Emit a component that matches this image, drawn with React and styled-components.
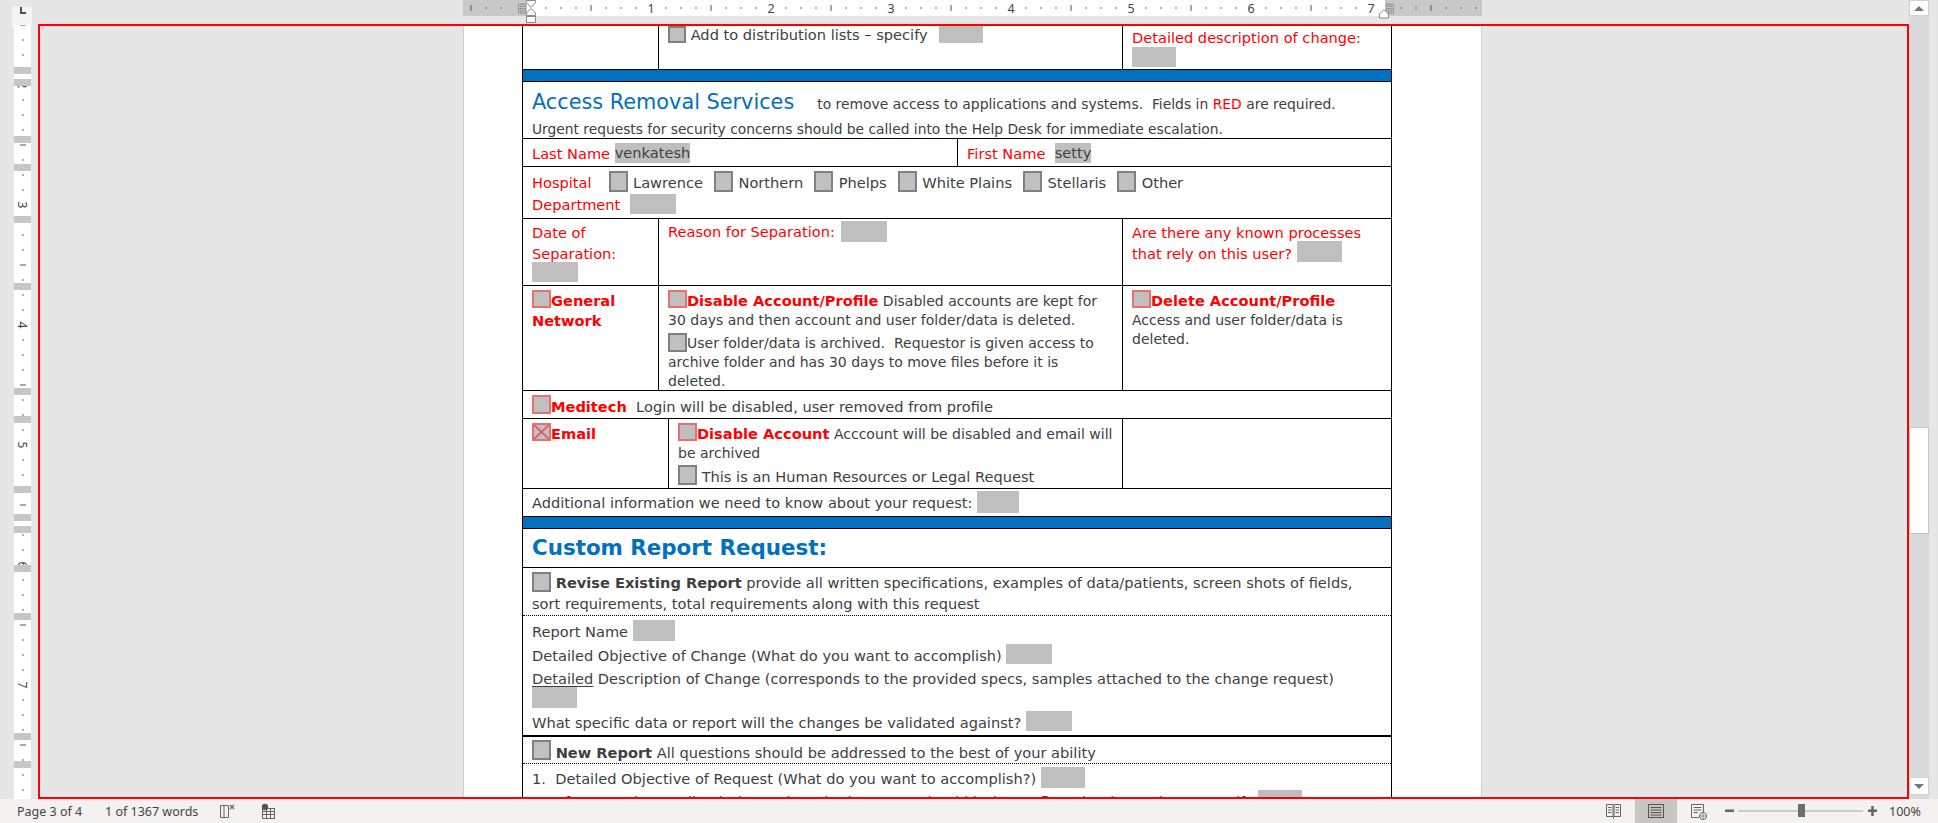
import React from "react";
import styled, { createGlobalStyle } from "styled-components";

const GlobalStyle = createGlobalStyle`
  html, body { margin: 0; padding: 0; }
  body { width: 1938px; height: 823px; overflow: hidden; background: #e6e6e6; }
  *, *::before, *::after { box-sizing: border-box; }
`;

const Window = styled.div`
  position: relative;
  width: 1938px;
  height: 823px;
  display: flex;
  flex-direction: column;
  background: #e6e6e6;
  font-family: "DejaVu Sans", Verdana, sans-serif;
  overflow: hidden;
`;

const Workspace = styled.div`
  display: grid;
  grid-template-columns: 38px 1871px 29px;
  grid-template-rows: 25px 774px;
  height: 799px;
`;

const Corner = styled.div`
  grid-column: 1;
  grid-row: 1;
  padding-left: 12px;
`;

const TabSelector = styled.div`
  width: 20px;
  height: 20px;
  background: #f5f5f5;
  &::before {
    content: "";
    display: block;
    margin: 7px 0 0 8px;
    width: 6px;
    height: 7px;
    border-left: 2px solid #505050;
    border-bottom: 2px solid #505050;
  }
`;

const HRulerBar = styled.div`
  grid-column: 2;
  grid-row: 1;
  padding-left: 425px;
  overflow: hidden;
  svg { display: block; }
`;

const VRulerCol = styled.div`
  grid-column: 1;
  grid-row: 2;
  padding-left: 14px;
  svg { display: block; }
`;

const ScrollCol = styled.div`
  grid-column: 3;
  grid-row: 1 / span 2;
  padding-right: 9px;
`;

const Track = styled.div`
  height: 100%;
  background: #dadada;
  display: flex;
  flex-direction: column;
`;

const ArrowBtn = styled.div`
  height: ${(p) => p.$h}px;
  background: #fff;
  border: 1px solid #d0d0d0;
  display: flex;
  align-items: center;
  justify-content: center;
  margin-bottom: ${(p) => p.$mb || 0}px;
  &::before {
    content: "";
    width: 0;
    height: 0;
    border-left: 5px solid transparent;
    border-right: 5px solid transparent;
    ${(p) => (p.$down ? "border-top: 5px solid #777;" : "border-bottom: 5px solid #777;")}
  }
`;

const Thumb = styled.div`
  margin-top: ${(p) => p.$top}px;
  height: ${(p) => p.$h}px;
  background: #fff;
  border: 1px solid #c6c6c6;
`;

const Filler = styled.div`
  flex: 1;
`;

const DocArea = styled.div`
  grid-column: 2;
  grid-row: 2;
  padding-left: 425px;
  overflow: hidden;
`;

const Page = styled.div`
  width: 1019px;
  height: 774px;
  background: #fff;
  border-left: 1px solid #cfcfcf;
  border-right: 1px solid #cfcfcf;
  padding-left: 58px;
  overflow: hidden;
`;

const Table = styled.div`
  width: 870px;
  border-left: 1px solid #000;
  border-right: 1px solid #000;
  color: #404040;
`;

const Row = styled.div`
  display: grid;
  grid-template-columns: ${(p) => p.$cols || "1fr"};
  height: ${(p) => p.$h}px;
  border-bottom: ${(p) => p.$bb || "1px solid #000"};
  background: ${(p) => p.$bg || "transparent"};
  font-size: ${(p) => p.$fs || 14.6}px;
  line-height: ${(p) => p.$lh || 20}px;
`;

const Cell = styled.div`
  padding: ${(p) => p.$pt ?? 4}px 9px 0 9px;
  white-space: nowrap;
  overflow: hidden;
  line-height: ${(p) => (p.$lh ? `${p.$lh}px` : "inherit")};
  & + & {
    border-left: 1px solid #000;
  }
`;

const Para = styled.div`
  margin-top: ${(p) => p.$mt || 0}px;
  line-height: ${(p) => (p.$lh ? `${p.$lh}px` : "inherit")};
  font-size: ${(p) => (p.$fs ? `${p.$fs}px` : "inherit")};
`;

const Red = styled.span`
  color: #ff0000;
`;

const B = styled.b`
  font-weight: bold;
  font-size: 14.6px;
  color: ${(p) => (p.$red ? "#ff0000" : "#404040")};
`;

const U = styled.span`
  text-decoration: underline;
  text-underline-offset: 2px;
`;

const Title = styled.span`
  color: #0070c0;
  font-size: 20.8px;
`;

const Sub = styled.span`
  font-size: 13.9px;
  line-height: 16px;
  margin-left: 23px;
`;

const H2 = styled.span`
  color: #0070c0;
  font-weight: bold;
  font-size: 21.4px;
`;

const Field = styled.span`
  display: ${(p) => (p.$block ? "block" : "inline-block")};
  width: ${(p) => p.$w}px;
  height: ${(p) => p.$h || 20}px;
  background: #bfbfbf;
  vertical-align: top;
  margin-top: ${(p) => p.$mt || 0}px;
  margin-left: ${(p) => p.$ml || 0}px;
`;

const Hl = styled.span`
  display: inline-block;
  height: 20px;
  line-height: 20px;
  background: #bfbfbf;
  vertical-align: top;
  margin-top: -1px;
`;

const CheckBox = styled.span`
  display: inline-block;
  width: ${(p) => p.$w}px;
  height: ${(p) => p.$h}px;
  margin-top: ${(p) => p.$mt}px;
  margin-right: ${(p) => p.$mr}px;
  margin-left: ${(p) => p.$ml}px;
  vertical-align: top;
  background: #c0c0c0;
  border: 2px solid ${(p) => (p.$red ? "#e8706f" : "#808080")};
  svg { display: block; }
`;

const Check = ({ red, checked, w = 18, h = 18, mt = -1, mr = 0, ml = 0 }) => (
  <CheckBox $red={red} $w={w} $h={h} $mt={mt} $mr={mr} $ml={ml}>
    {checked && (
      <svg width="100%" height="100%" viewBox="0 0 10 10" preserveAspectRatio="none">
        <path d="M0 0 L10 10 M10 0 L0 10" stroke="#e5504f" strokeWidth="1.1" fill="none" />
      </svg>
    )}
  </CheckBox>
);

const OptLabel = styled.span`
  margin-right: 11px;
`;

const Opt = ({ label, first }) => (
  <>
    <Check w={19} h={21} mt={-1} mr={5.5} ml={first ? 17 : 0} />
    <OptLabel>{label}</OptLabel>
  </>
);

const StatusBar = styled.div`
  height: 24px;
  background: #f3f2f1;
  display: flex;
  align-items: center;
  font-family: "Noto Sans", "Open Sans", sans-serif;
  font-size: 12.5px;
  color: #444;
  svg { display: block; }
`;

const StatusText = styled.span`
  width: ${(p) => p.$w}px;
  margin-left: ${(p) => p.$ml || 0}px;
  white-space: nowrap;
`;

const StatusIcon = styled.div`
  width: ${(p) => p.$w}px;
  margin-left: ${(p) => p.$ml || 0}px;
  height: 24px;
  display: flex;
  align-items: center;
  justify-content: center;
  background: ${(p) => (p.$active ? "#c8c6c4" : "transparent")};
`;

const RightGroup = styled.div`
  margin-left: auto;
  display: flex;
  align-items: center;
  height: 24px;
`;

const RedFrame = styled.div`
  position: absolute;
  left: 38px;
  top: 24px;
  width: 1871px;
  height: 775px;
  border: 2px solid #ff0000;
  pointer-events: none;
`;

function HRuler() {
  const W = 1019;
  const zero = 68;
  const items = [];
  for (let k = -4; k <= 63; k++) {
    const x = zero + 15 * k;
    if (k === 0 || k === -1 || k === 57) continue;
    if (k > 0 && k % 8 === 0) {
      items.push(
        <text key={k} x={x} y={12.5} fontSize="12.5" textAnchor="middle" fill="#444" fontFamily="Noto Sans, sans-serif">
          {k / 8}
        </text>
      );
    } else if (k % 4 === 0) {
      items.push(<rect key={k} x={x - 0.5} y={5} width={1} height={6} fill="#555" />);
    } else {
      items.push(<rect key={k} x={x - 0.5} y={7} width={1} height={2} fill="#666" />);
    }
  }
  const grid = (x0) => {
    const g = [];
    for (let c = 0; c < 4; c++)
      for (let r = 0; r < 5; r++)
        g.push(<rect key={`${x0}-${c}-${r}`} x={x0 + c * 2.2} y={3.5 + r * 2.2} width={1.3} height={1.3} fill="#777" />);
    return g;
  };
  return (
    <svg width={W} height={25}>
      <rect x={0} y={0} width={W} height={16} fill="#c8c8c8" />
      <rect x={64} y={0} width={858} height={16} fill="#fff" />
      {items}
      {grid(55)}
      {grid(923)}
      <path d="M63.5 0.5 H72.5 V2.5 L68 7.5 L63.5 2.5 Z" fill="#fff" stroke="#8a8a8a" />
      <path d="M68 8.5 L72.5 13 V15.5 H63.5 V13 Z" fill="#fff" stroke="#8a8a8a" />
      <rect x={63.5} y={16.5} width={9} height={6} fill="#fff" stroke="#8a8a8a" />
      <path d="M916.5 14 L921 9.5 L925.5 14 V18 H916.5 Z" fill="#fff" stroke="#8a8a8a" />
    </svg>
  );
}

function VRuler() {
  const H = 774;
  const items = [];
  for (let j = -4; j <= 48; j++) {
    const y = 85 + 15 * j - 25;
    if (y < 0 || y > H) continue;
    if (j % 8 === 0) {
      items.push(
        <text
          key={j}
          transform={`translate(8.5, ${y}) rotate(90)`}
          fontSize="12"
          textAnchor="middle"
          dominantBaseline="central"
          fill="#444"
          fontFamily="Noto Sans, sans-serif"
        >
          {2 + j / 8}
        </text>
      );
    } else if (j % 4 === 0) {
      items.push(<rect key={j} x={6} y={y - 0.5} width={6} height={1} fill="#555" />);
    } else {
      items.push(<rect key={j} x={8} y={y - 0.5} width={2} height={1} fill="#666" />);
    }
  }
  const borders = [69, 81, 138, 166, 218, 285, 390, 418, 488, 516, 528, 567, 615, 735, 763];
  return (
    <svg width={17} height={H}>
      <rect x={0} y={0} width={17} height={H} fill="#fff" />
      {items}
      {borders.map((b) => (
        <rect key={b} x={0} y={b - 27} width={17} height={7} fill="#c6c6c6" />
      ))}
    </svg>
  );
}

const ProofIcon = () => (
  <svg width="18" height="16" viewBox="0 0 18 16">
    <path d="M1.5 2.5 H5 V14.5 H1.5 Z M5 2.5 H9.5 V14.5 H5" fill="none" stroke="#666" />
    <path d="M11 2 L15 6 M15 2 L11 6" stroke="#666" strokeWidth="1.2" />
  </svg>
);

const MacroIcon = () => (
  <svg width="16" height="16" viewBox="0 0 16 16">
    <rect x="2.5" y="5.5" width="12" height="10" fill="none" stroke="#666" />
    <path d="M2.5 8.5 H14.5 M2.5 11.5 H14.5 M6.5 5.5 V15.5 M10.5 5.5 V15.5" stroke="#666" />
    <circle cx="5" cy="4" r="3.2" fill="#555" />
  </svg>
);

const ReadIcon = () => (
  <svg width="17" height="16" viewBox="0 0 17 16">
    <path d="M1.5 1.5 H8 V13.5 H1.5 Z M9 1.5 H15.5 V13.5 H9 Z" fill="none" stroke="#666" />
    <path d="M3 4.5 H6.5 M3 7 H6.5 M3 9.5 H6.5 M10.5 4.5 H14 M10.5 7 H14 M10.5 9.5 H14 M8.5 13.5 V15.5" stroke="#666" />
  </svg>
);

const PrintIcon = () => (
  <svg width="18" height="16" viewBox="0 0 18 16">
    <rect x="1.5" y="1.5" width="15" height="13" fill="none" stroke="#555" />
    <path d="M3.5 4.5 H14.5 M3.5 7 H14.5 M3.5 9.5 H14.5 M3.5 12 H14.5" stroke="#555" />
  </svg>
);

const WebIcon = () => (
  <svg width="18" height="17" viewBox="0 0 18 17">
    <path d="M1.5 1.5 H13.5 V9 M1.5 1.5 V14.5 H9" fill="none" stroke="#666" />
    <path d="M3.5 4.5 H11.5 M3.5 7 H11.5 M3.5 9.5 H8" stroke="#666" />
    <circle cx="13" cy="13" r="3.5" fill="#fff" stroke="#666" />
    <path d="M9.5 13 H16.5 M13 9.5 V16.5" stroke="#666" strokeWidth="0.8" />
  </svg>
);

const ZoomSlider = () => (
  <svg width="154" height="16" viewBox="0 0 154 16">
    <rect x="1" y="6.5" width="9" height="2.5" fill="#666" />
    <rect x="14" y="7.5" width="125" height="1" fill="#a6a6a6" />
    <rect x="74" y="1" width="7" height="13" fill="#6e6e6e" />
    <rect x="144" y="6.5" width="9" height="2.5" fill="#666" />
    <rect x="147.25" y="3" width="2.5" height="10" fill="#666" />
  </svg>
);

export default function App() {
  return (
    <>
      <GlobalStyle />
      <Window>
        <Workspace>
          <Corner>
            <TabSelector />
          </Corner>
          <HRulerBar>
            <HRuler />
          </HRulerBar>
          <ScrollCol>
            <Track>
              <ArrowBtn $h={16} />
              <Thumb $top={411} $h={107} />
              <Filler />
              <ArrowBtn $h={18} $down $mb={4} />
            </Track>
          </ScrollCol>
          <VRulerCol>
            <VRuler />
          </VRulerCol>
          <DocArea>
            <Page>
              <Table>
                <Row $h={45} $cols="135px 464px 1fr">
                  <Cell />
                  <Cell $pt={0}>
                    <Check w={18} h={17} mt={1} /> Add to distribution lists – specify
                    <Field $w={44} $h={17} $mt={1} $ml={11} />
                  </Cell>
                  <Cell $pt={3} $lh={19}>
                    <Red>Detailed description of change:</Red>
                    <Field $block $w={44} $h={20} />
                  </Cell>
                </Row>
                <Row $h={12} $bg="#0070c0" />
                <Row $h={57}>
                  <Cell $pt={5}>
                    <Para $lh={30}>
                      <Title>Access Removal Services</Title>
                      <Sub>
                        to remove access to applications and systems.&nbsp; Fields in <Red>RED</Red> are required.
                      </Sub>
                    </Para>
                    <Para $lh={20} $fs={13.8}>
                      Urgent requests for security concerns should be called into the Help Desk for immediate escalation.
                    </Para>
                  </Cell>
                </Row>
                <Row $h={28} $cols="434px 1fr">
                  <Cell $pt={5}>
                    <Red>Last Name</Red> <Hl>venkatesh</Hl>
                  </Cell>
                  <Cell $pt={5}>
                    <Red>First Name</Red>&nbsp; <Hl>setty</Hl>
                  </Cell>
                </Row>
                <Row $h={52} $lh={22}>
                  <Cell $pt={5}>
                    <Para>
                      <Red>Hospital</Red>
                      <Opt first label="Lawrence" />
                      <Opt label="Northern" />
                      <Opt label="Phelps" />
                      <Opt label="White Plains" />
                      <Opt label="Stellaris" />
                      <Opt label="Other" />
                    </Para>
                    <Para>
                      <Red>Department</Red>
                      <Field $w={46} $h={20} $ml={10} $mt={0} />
                    </Para>
                  </Cell>
                </Row>
                <Row $h={67} $cols="135px 464px 1fr" $lh={21}>
                  <Cell $pt={3}>
                    <Red>
                      Date of
                      <br />
                      Separation:
                    </Red>
                    <Field $block $w={46} $h={20} $mt={-2} />
                  </Cell>
                  <Cell $pt={2}>
                    <Red>Reason for Separation:</Red>
                    <Field $w={46} $h={21} $ml={6} />
                  </Cell>
                  <Cell $pt={3}>
                    <Red>
                      Are there any known processes
                      <br />
                      that rely on this user?
                    </Red>
                    <Field $w={45} $h={21} $ml={5} $mt={-2} />
                  </Cell>
                </Row>
                <Row $h={105} $cols="135px 464px 1fr" $fs={14} $lh={19}>
                  <Cell $pt={5}>
                    <Check red w={19} h={18} mt={-1} />
                    <B $red>
                      General
                      <br />
                      Network
                    </B>
                  </Cell>
                  <Cell $pt={5}>
                    <Para>
                      <Check red w={19} h={18} mt={-1} />
                      <B $red>Disable Account/Profile</B> Disabled accounts are kept for
                      <br />
                      30 days and then account and user folder/data is deleted.
                    </Para>
                    <Para $mt={4}>
                      <Check w={19} h={19} mt={-1} />
                      User folder/data is archived.&nbsp; Requestor is given access to
                      <br />
                      archive folder and has 30 days to move files before it is
                      <br />
                      deleted.
                    </Para>
                  </Cell>
                  <Cell $pt={5}>
                    <Check red w={19} h={18} mt={-1} />
                    <B $red>Delete Account/Profile</B>
                    <br />
                    Access and user folder/data is
                    <br />
                    deleted.
                  </Cell>
                </Row>
                <Row $h={28}>
                  <Cell $pt={6}>
                    <Check red w={19} h={19} mt={-2} />
                    <B $red>Meditech</B>&nbsp; Login will be disabled, user removed from profile
                  </Cell>
                </Row>
                <Row $h={70} $cols="145px 454px 1fr" $fs={14} $lh={19}>
                  <Cell $pt={5}>
                    <Check red checked w={19} h={18} mt={-1} />
                    <B $red>Email</B>
                  </Cell>
                  <Cell $pt={5}>
                    <Para>
                      <Check red w={19} h={18} mt={-1} />
                      <B $red>Disable Account</B> Acccount will be disabled and email will
                      <br />
                      be archived
                    </Para>
                    <Para $mt={4} $fs={14.6}>
                      <Check w={19} h={20} mt={-2} /> This is an Human Resources or Legal Request
                    </Para>
                  </Cell>
                  <Cell />
                </Row>
                <Row $h={28}>
                  <Cell $pt={4}>
                    Additional information we need to know about your request: <Field $w={42} $h={22} $mt={-2} />
                  </Cell>
                </Row>
                <Row $h={12} $bg="#0070c0" />
                <Row $h={39}>
                  <Cell $pt={5} $lh={28}>
                    <H2>Custom Report Request:</H2>
                  </Cell>
                </Row>
                <Row $h={48} $bb="1px dotted #000" $lh={21}>
                  <Cell $pt={4}>
                    <Check w={19} h={20} mt={0} /> <B>Revise Existing Report</B> provide all written specifications,
                    examples of data/patients, screen shots of fields,
                    <br />
                    sort requirements, total requirements along with this request
                  </Cell>
                </Row>
                <Row $h={121} $bb="2px solid #000">
                  <Cell $pt={5}>
                    <Para $lh={21}>
                      Report Name <Field $w={42} $h={21} $mt={-1} />
                    </Para>
                    <Para $lh={21} $mt={3}>
                      Detailed Objective of Change (What do you want to accomplish) <Field $w={46} $h={20} $mt={-1} />
                    </Para>
                    <Para $lh={19} $mt={3}>
                      <U>Detailed</U> Description of Change (corresponds to the provided specs, samples attached to the
                      change request)
                      <br />
                      <Field $w={45} $h={21} $mt={-1} />
                    </Para>
                    <Para $lh={21} $mt={4}>
                      What specific data or report will the changes be validated against?{" "}
                      <Field $w={46} $h={20} $mt={-1} />
                    </Para>
                  </Cell>
                </Row>
                <Row $h={27} $bb="1px dotted #000" $lh={21}>
                  <Cell $pt={5}>
                    <Check w={19} h={20} mt={-2} /> <B>New Report</B> All questions should be addressed to the best of
                    your ability
                  </Cell>
                </Row>
                <Row $h={60} $bb="none" $lh={22}>
                  <Cell $pt={4}>
                    <Para>
                      1.&nbsp; Detailed Objective of Request (What do you want to accomplish?){" "}
                      <Field $w={44} $h={21} $mt={-1} />
                    </Para>
                    <Para $mt={1}>
                      2.&nbsp; After entering Meditech data, where in the report should it then reflect the data? Please
                      specify <Field $w={44} $h={21} $mt={-1} />
                    </Para>
                  </Cell>
                </Row>
              </Table>
            </Page>
          </DocArea>
        </Workspace>
        <StatusBar>
          <StatusText $ml={17} $w={88}>
            Page 3 of 4
          </StatusText>
          <StatusText $w={114}>1 of 1367 words</StatusText>
          <StatusIcon $w={18}>
            <ProofIcon />
          </StatusIcon>
          <StatusIcon $w={16} $ml={23}>
            <MacroIcon />
          </StatusIcon>
          <RightGroup>
            <StatusIcon $w={17}>
              <ReadIcon />
            </StatusIcon>
            <StatusIcon $w={42} $ml={13} $active>
              <PrintIcon />
            </StatusIcon>
            <StatusIcon $w={18} $ml={13}>
              <WebIcon />
            </StatusIcon>
            <StatusIcon $w={154} $ml={16}>
              <ZoomSlider />
            </StatusIcon>
            <StatusText $w={49} $ml={11}>
              100%
            </StatusText>
          </RightGroup>
        </StatusBar>
        <RedFrame />
      </Window>
    </>
  );
}
